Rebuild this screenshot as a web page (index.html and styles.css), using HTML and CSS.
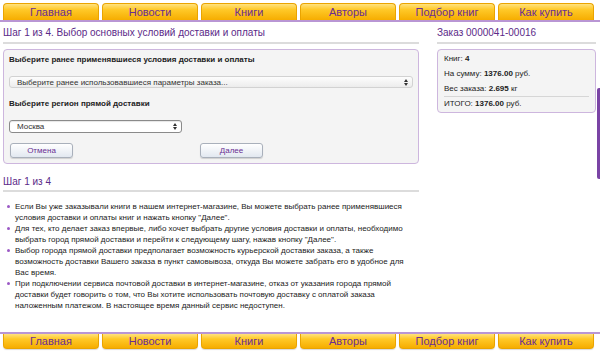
FILE: index.html
```html
<!DOCTYPE html>
<html lang="ru">
<head>
    <meta charset="UTF-8">
    <title>Оформление заказа</title>
    <link rel="stylesheet" href="styles.css">
</head>
<body>

    <nav class="tabs tabs-top">
        <a class="tab" href="#">Главная</a>
        <a class="tab" href="#">Новости</a>
        <a class="tab" href="#">Книги</a>
        <a class="tab" href="#">Авторы</a>
        <a class="tab" href="#">Подбор книг</a>
        <a class="tab" href="#">Как купить</a>
    </nav>

    <div class="page">
        <div class="main-col">
            <h2 class="title">Шаг 1 из 4. Выбор основных условий доставки и оплаты</h2>

            <div class="panel">
                <div class="label">Выберите ранее применявшиеся условия доставки и оплаты</div>
                <div class="select select-wide">
                    <select>
                        <option>Выберите ранее использовавшиеся параметры заказа...</option>
                    </select>
                    <svg class="arrows" width="4" height="7" viewBox="0 0 4 7"><path d="M0 3 L2 0 L4 3 Z M0 4 L4 4 L2 7 Z" fill="#333"/></svg>
                </div>

                <div class="label">Выберите регион прямой доставки</div>
                <div class="select select-city">
                    <select>
                        <option>Москва</option>
                    </select>
                    <svg class="arrows" width="4" height="7" viewBox="0 0 4 7"><path d="M0 3 L2 0 L4 3 Z M0 4 L4 4 L2 7 Z" fill="#333"/></svg>
                </div>

                <div class="buttons">
                    <button class="btn">Отмена</button>
                    <button class="btn">Далее</button>
                </div>
            </div>

            <h2 class="title title-help">Шаг 1 из 4</h2>
            <ul class="help">
                <li>Если Вы уже заказывали книги в нашем интернет-магазине, Вы можете выбрать ранее применявшиеся условия доставки и оплаты книг и нажать кнопку "Далее".</li>
                <li>Для тех, кто делает заказ впервые, либо хочет выбрать другие условия доставки и оплаты, необходимо выбрать город прямой доставки и перейти к следующему шагу, нажав кнопку "Далее".</li>
                <li>Выбор города прямой доставки предполагает возможность курьерской доставки заказа, а также возможность доставки Вашего заказа в пункт самовывоза, откуда Вы можете забрать его в удобное для Вас время.</li>
                <li>При подключении сервиса почтовой доставки в интернет-магазине, отказ от указания города прямой доставки будет говорить о том, что Вы хотите использовать почтовую доставку с оплатой заказа наложенным платежом. В настоящее время данный сервис недоступен.</li>
            </ul>
        </div>

        <div class="side-col">
            <h2 class="title">Заказ 0000041-00016</h2>
            <div class="panel order">
                <div class="order-row">Книг: <b>4</b></div>
                <div class="order-row">На сумму: <b>1376.00</b> руб.</div>
                <div class="order-row">Вес заказа: <b>2.695</b> кг</div>
                <div class="order-row order-total">ИТОГО: <b>1376.00</b> руб.</div>
            </div>
        </div>

        <div class="side-bar"></div>
    </div>

    <nav class="tabs tabs-bottom">
        <a class="tab" href="#">Главная</a>
        <a class="tab" href="#">Новости</a>
        <a class="tab" href="#">Книги</a>
        <a class="tab" href="#">Авторы</a>
        <a class="tab" href="#">Подбор книг</a>
        <a class="tab" href="#">Как купить</a>
    </nav>

</body>
</html>
```

FILE: styles.css
```css
body {
    font-family: "Liberation Sans", Arial, sans-serif;
    margin: 0;
    padding: 0;
    background-color: #fff;
    color: #222;
    width: 600px;
    height: 355px;
    overflow: hidden;
    position: relative;
}

/* menu tabs */
.tabs {
    display: flex;
    gap: 3px;
    padding: 0 6px 0 3px;
}

.tabs-top {
    padding-top: 3px;
    border-bottom: 2px solid #b996d4;
}

.tabs-bottom {
    border-top: 2px solid #b996d4;
}

.tab {
    flex: 1;
    height: 16px;
    line-height: 17px;
    text-align: center;
    font-size: 11px;
    color: #6a2d93;
    text-decoration: none;
    background: linear-gradient(#ffe27e 0%, #ffc928 35%, #f6ad00 100%);
    border: 1px solid #eaa400;
}

.tabs-top .tab {
    border-bottom: none;
    border-radius: 4px 4px 0 0;
}

.tabs-bottom .tab {
    height: 14px;
    line-height: 14px;
    border-top: none;
    border-radius: 0 0 4px 4px;
    box-shadow: 0 1px 1px rgba(0, 0, 0, 0.15);
}

/* columns */
.page {
    display: flex;
    padding: 0 4px 0 3px;
    height: 310px;
}

.main-col {
    width: 416px;
}

.side-col {
    width: 159px;
    margin-left: 18px;
}

.title {
    font-size: 10px;
    line-height: 12px;
    font-weight: normal;
    color: #5b2a88;
    margin: 0;
    padding: 5px 0 3px;
    border-bottom: 2px solid #dcdcdc;
}

.panel {
    margin-top: 5px;
    background-color: #f4f4f4;
    border: 1px solid #cdb6de;
    border-radius: 4px;
    padding: 5px 6px 5px 5px;
}

.label {
    font-size: 8px;
    line-height: 10px;
    font-weight: bold;
    color: #222;
    margin: 0 0 11px;
}

/* selects */
.select {
    position: relative;
    margin-bottom: 11px;
}

.select select {
    display: block;
    appearance: none;
    width: 100%;
    height: 12px;
    margin: 0;
    padding: 0 0 0 7px;
    font-family: inherit;
    font-size: 8px;
    color: #333;
    background: linear-gradient(#fdfdfd, #ececec);
    border: 1px solid #d2d2d2;
    border-radius: 3px;
}

.arrows {
    position: absolute;
    right: 5px;
    top: 3px;
}

.select-wide {
    width: 404px;
}

.select-city {
    width: 173px;
    margin-bottom: 10px;
}

.select-city select {
    height: 13px;
    background: #fff;
    border-color: #8a8a8a;
    box-shadow: inset 0 1px 1px rgba(0, 0, 0, 0.1);
}

.select-city .arrows {
    top: 3px;
}

/* buttons */
.buttons {
    display: flex;
    gap: 127px;
    padding-left: 1px;
}

.btn {
    width: 63px;
    height: 15px;
    padding: 0;
    font-family: inherit;
    font-size: 8px;
    color: #6a2d93;
    background: linear-gradient(#ffffff, #e2e8f0);
    border: 1px solid #a9b0bb;
    border-radius: 3px;
    box-shadow: 0 1px 1px rgba(0, 0, 0, 0.15);
}

/* help text */
.title-help {
    margin-top: 7px;
    padding-bottom: 2px;
}

.help {
    margin: 9px 0 0;
    padding: 0 0 0 12px;
    font-size: 8px;
    line-height: 11px;
    color: #222;
}

.help li {
    list-style: none;
    position: relative;
}

.help li::before {
    content: "";
    position: absolute;
    left: -8px;
    top: 4px;
    width: 3px;
    height: 3px;
    border-radius: 50%;
    background-color: #9b59c5;
}

/* order box */
.order {
    padding: 1px 6px 2px;
}

.order-row {
    font-size: 8px;
    line-height: 15px;
    color: #222;
}

.order-total {
    border-top: 1px solid #d6d6d6;
    margin-top: 0;
    line-height: 13px;
}

.side-bar {
    position: absolute;
    right: 0;
    top: 88px;
    width: 3px;
    height: 91px;
    background-color: #7a44a5;
    border-radius: 2px 0 0 2px;
}
```
